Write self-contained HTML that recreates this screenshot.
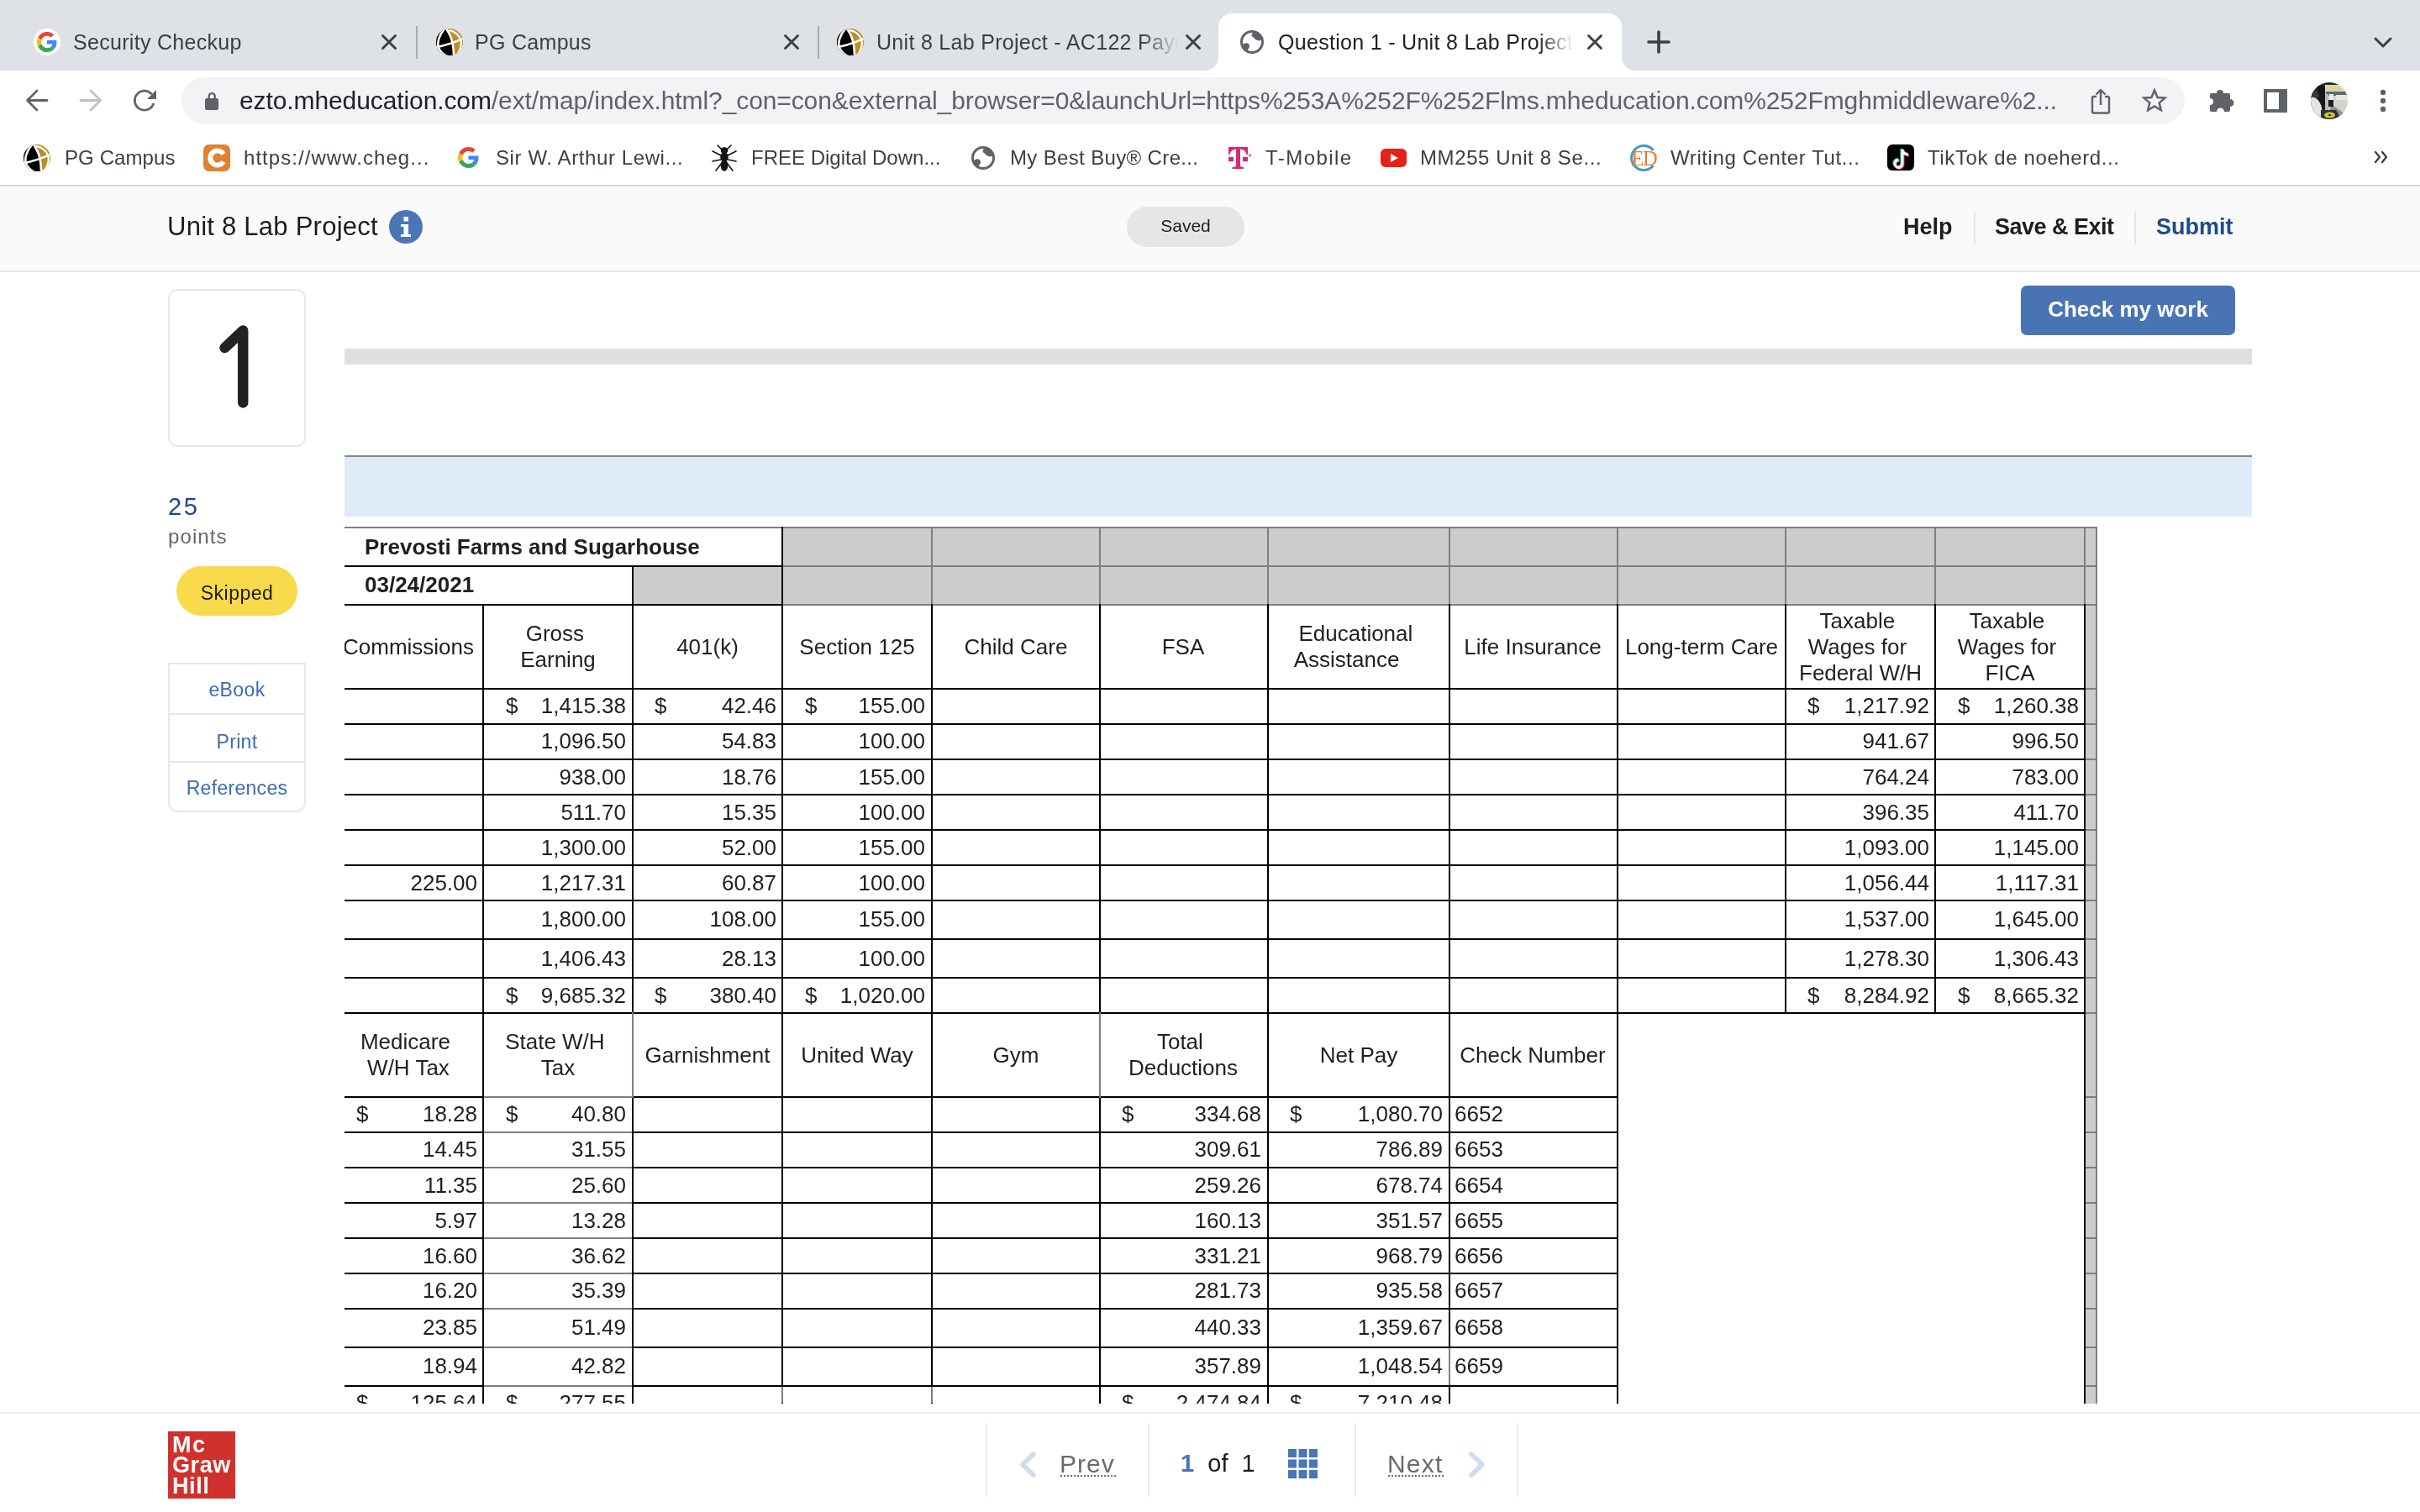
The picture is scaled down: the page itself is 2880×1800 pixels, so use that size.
<!DOCTYPE html>
<html><head><meta charset="utf-8">
<style>
*{box-sizing:border-box;margin:0;padding:0}
html,body{width:2880px;height:1800px;overflow:hidden;background:#fff;font-family:"Liberation Sans",sans-serif}
body{will-change:transform}
.abs{position:absolute}
#tabs{position:absolute;left:0;top:0;width:2880px;height:84px;background:#dee1e6}
.tt{position:absolute;top:35px;letter-spacing:0.3px;font-size:25px;line-height:30px;color:#3c4043;white-space:nowrap;overflow:hidden}
.fade{-webkit-mask-image:linear-gradient(to right,#000 88%,transparent 100%)}
.sep{position:absolute;top:31px;width:2px;height:39px;background:#a9acb1}
#toolbar{position:absolute;left:0;top:84px;width:2880px;height:137px;background:#fff}
#omni{position:absolute;left:216px;top:92px;width:2384px;height:56px;border-radius:28px;background:#f1f3f4}
.url{position:absolute;left:285px;top:104px;font-size:30px;line-height:32px;color:#5f6368;white-space:nowrap}
.bm{position:absolute;top:173px;font-size:24px;line-height:30px;color:#3c4043;white-space:nowrap}
#bmline{position:absolute;left:0;top:220px;width:2880px;height:2px;background:#d9d9d9}
#hdr{position:absolute;left:0;top:222px;width:2880px;height:101px;background:#fafafa;border-bottom:2px solid #e6e6e6}
.tc{font-size:26px;color:#1f1f1f;text-align:center;white-space:nowrap}
.tr{font-size:26px;line-height:31px;color:#1f1f1f;white-space:nowrap}
.tl{font-size:26px;line-height:31px;color:#1f1f1f;white-space:nowrap}
.bm{letter-spacing:0.6px}
</style></head>
<body>
<!-- TAB STRIP -->
<div id="tabs">
  <div class="sep" style="left:495px"></div>
  <div class="sep" style="left:973px"></div>
  <svg class="abs" style="left:0;top:0" width="2880" height="84">
    <path d="M1434 84 A16 16 0 0 0 1450 68 L1450 32 A16 16 0 0 1 1466 16 L1914 16 A16 16 0 0 1 1930 32 L1930 68 A16 16 0 0 0 1946 84 Z" fill="#fff"/>
    <!-- tab1 google favicon -->
    <circle cx="56" cy="50" r="16" fill="#fff"/>
    <g transform="translate(44,38) scale(0.5)">
      <path fill="#EA4335" d="M24 9.5c3.54 0 6.71 1.22 9.21 3.6l6.85-6.85C35.9 2.38 30.47 0 24 0 14.62 0 6.51 5.38 2.56 13.22l7.98 6.19C12.43 13.72 17.74 9.5 24 9.5z"/>
      <path fill="#4285F4" d="M46.98 24.55c0-1.57-.15-3.09-.38-4.55H24v9.02h12.94c-.58 2.96-2.26 5.480-4.78 7.18l7.73 6c4.51-4.18 7.090-10.36 7.09-17.65z"/>
      <path fill="#FBBC05" d="M10.53 28.59c-.48-1.45-.76-2.99-.76-4.59s.27-3.14.76-4.59l-7.98-6.19C.92 16.46 0 20.12 0 24c0 3.88.92 7.54 2.56 10.78l7.97-6.19z"/>
      <path fill="#34A853" d="M24 48c6.480 0 11.930-2.13 15.890-5.81l-7.73-6c-2.15 1.45-4.92 2.3-8.16 2.3-6.26 0-11.57-4.22-13.47-9.91l-7.98 6.19C6.51 42.62 14.62 48 24 48z"/>
    </g>
    <!-- PG globe tab2, tab3 -->
    <g transform="translate(519,34)">
      <clipPath id="pgc1"><circle cx="16" cy="16" r="16"/></clipPath>
      <g clip-path="url(#pgc1)">
        <rect x="-1" y="-1" width="34" height="34" fill="#b88f2e"/>
        <path d="M-1 -1 H12 C16 6 19 12 20 20 C21 25 21 29 21 33 H-1 Z" fill="#000"/>
        <path d="M11 -1 C3 8 1 17 3 23 C5 28 9 31 15 34" fill="none" stroke="#fff" stroke-width="2.6"/>
        <path d="M12 0 C16 6 19 12 20 20 C21 25 21 29 21 34" fill="none" stroke="#fff" stroke-width="2.6"/>
        <path d="M-1 22.5 C10 20.5 22 16.5 33 11.5" fill="none" stroke="#fff" stroke-width="2.6"/>
        <path d="M15 1.8 C22 3 28 8 29.5 14 C30.5 20 28.5 26 25 31" fill="none" stroke="#fff" stroke-width="2.2"/>
      </g>
    </g>
    <g transform="translate(996,34)">
      <clipPath id="pgc2"><circle cx="16" cy="16" r="16"/></clipPath>
      <g clip-path="url(#pgc2)">
        <rect x="-1" y="-1" width="34" height="34" fill="#b88f2e"/>
        <path d="M-1 -1 H12 C16 6 19 12 20 20 C21 25 21 29 21 33 H-1 Z" fill="#000"/>
        <path d="M11 -1 C3 8 1 17 3 23 C5 28 9 31 15 34" fill="none" stroke="#fff" stroke-width="2.6"/>
        <path d="M12 0 C16 6 19 12 20 20 C21 25 21 29 21 34" fill="none" stroke="#fff" stroke-width="2.6"/>
        <path d="M-1 22.5 C10 20.5 22 16.5 33 11.5" fill="none" stroke="#fff" stroke-width="2.6"/>
        <path d="M15 1.8 C22 3 28 8 29.5 14 C30.5 20 28.5 26 25 31" fill="none" stroke="#fff" stroke-width="2.2"/>
      </g>
    </g>
    <!-- generic globe active tab -->
    <g transform="translate(1476,36)">
      <circle cx="14" cy="14" r="12.5" fill="#fff" stroke="#5f6368" stroke-width="3"/>
      <path d="M3 17 C7 14 11 15 11 19 C11 22 8 22 9 26 C5 24 3 21 3 17Z" fill="#5f6368"/>
      <path d="M16 2.5 C13 4 13 7 15 8 C17 9 17 11 20 12 C23 13 25 12 26 10 C24 6 21 3 16 2.5Z" fill="#5f6368"/>
    </g>
    <!-- close x -->
    <g transform="translate(463,50)"><path d="M-7.5 -7.5 L7.5 7.5 M7.5 -7.5 L-7.5 7.5" stroke="#3c4043" stroke-width="2.9" stroke-linecap="round"/></g>
    <g transform="translate(942,50)"><path d="M-7.5 -7.5 L7.5 7.5 M7.5 -7.5 L-7.5 7.5" stroke="#3c4043" stroke-width="2.9" stroke-linecap="round"/></g>
    <g transform="translate(1420,50)"><path d="M-7.5 -7.5 L7.5 7.5 M7.5 -7.5 L-7.5 7.5" stroke="#3c4043" stroke-width="2.9" stroke-linecap="round"/></g>
    <g transform="translate(1898,50)"><path d="M-7.5 -7.5 L7.5 7.5 M7.5 -7.5 L-7.5 7.5" stroke="#3c4043" stroke-width="2.9" stroke-linecap="round"/></g>
    <!-- plus -->
    <path d="M1974 38 V62 M1962 50 H1986" stroke="#3c4043" stroke-width="3.6" stroke-linecap="round"/>
    <!-- chevron -->
    <path d="M2827 46 L2836 55 L2845 46" stroke="#3c4043" stroke-width="3" fill="none" stroke-linecap="round" stroke-linejoin="round"/>
  </svg>
  <div class="tt" style="left:87px;width:340px;color:#3c4043">Security Checkup</div>
  <div class="tt" style="left:565px;width:340px;color:#3c4043">PG Campus</div>
  <div class="tt fade" style="left:1043px;width:360px;color:#3c4043">Unit 8 Lab Project - AC122 Payroll</div>
  <div class="tt fade" style="left:1521px;width:352px;color:#202124">Question 1 - Unit 8 Lab Project</div>
</div>

<!-- TOOLBAR -->
<div id="toolbar"></div>
<div id="omni"></div>
<svg class="abs" style="left:0;top:84px" width="2880" height="137">
  <g transform="translate(0,-84)">
  <!-- back -->
  <path d="M56 119.5 H33 M44 108 L32.5 119.5 L44 131" stroke="#5f6368" stroke-width="2.8" fill="none" stroke-linecap="round" stroke-linejoin="round"/>
  <!-- forward -->
  <path d="M96 119.5 H119 M108 108 L119.5 119.5 L108 131" stroke="#bdc1c6" stroke-width="2.8" fill="none" stroke-linecap="round" stroke-linejoin="round"/>
  <!-- reload -->
  <path d="M182.5 124 A11.5 11.5 0 1 1 180 111.5" stroke="#5f6368" stroke-width="2.8" fill="none" stroke-linecap="round"/>
  <path d="M186 107 L186 118 L175 118 Z" fill="#5f6368"/>
  <!-- lock -->
  <rect x="244" y="117" width="16" height="14" rx="2" fill="#5f6368"/>
  <path d="M248.7 118 V114.6 A3.5 3.5 0 0 1 255.7 114.6 V118" stroke="#5f6368" stroke-width="2.4" fill="none"/>
  <!-- share -->
  <path d="M2495 115 H2491.5 A1.5 1.5 0 0 0 2490 116.5 V133 A1.5 1.5 0 0 0 2491.5 134.5 H2508.5 A1.5 1.5 0 0 0 2510 133 V116.5 A1.5 1.5 0 0 0 2508.5 115 H2505" stroke="#5f6368" stroke-width="2.4" fill="none"/>
  <path d="M2500 125 V107.5 M2494.5 112.5 L2500 107 L2505.5 112.5" stroke="#5f6368" stroke-width="2.4" fill="none" stroke-linejoin="round"/>
  <!-- star -->
  <path d="M2564 107.5 L2567.6 116 L2576.5 116.6 L2569.7 122.4 L2571.8 131.2 L2564 126.4 L2556.2 131.2 L2558.3 122.4 L2551.5 116.6 L2560.4 116 Z" stroke="#5f6368" stroke-width="2.5" fill="none" stroke-linejoin="miter"/>
  <!-- puzzle -->
  <path d="M2632 111 H2638 A4 4 0 0 1 2646 111 H2652 A2 2 0 0 1 2654 113 V118 A4 4 0 0 1 2654 127 V131 A2 2 0 0 1 2652 133 H2647 A4 4 0 0 0 2638 133 H2632 A2 2 0 0 1 2630 131 V125 A4 4 0 0 0 2630 117 V113 A2 2 0 0 1 2632 111 Z" fill="#5f6368"/>
  <!-- side panel -->
  <rect x="2694" y="106" width="28" height="28" fill="#5f6368"/>
  <rect x="2698" y="110" width="14" height="20" fill="#fff"/>
  <!-- avatar -->
  <defs>
    <linearGradient id="av" x1="0" y1="0" x2="1" y2="0.3">
      <stop offset="0" stop-color="#4a4f55"/><stop offset="0.35" stop-color="#2b2e33"/><stop offset="0.55" stop-color="#9aa3ad"/><stop offset="1" stop-color="#d9d6cc"/>
    </linearGradient>
    <clipPath id="avc"><circle cx="2772" cy="120" r="22"/></clipPath>
  </defs>
  <g clip-path="url(#avc)">
    <g transform="translate(2750,98)">
    <rect x="0" y="0" width="44" height="44" fill="#d6d4ca"/>
    <rect x="16" y="1.5" width="28" height="13" fill="#ddd6a4"/>
    <rect x="18" y="11" width="26" height="5" fill="#55706a"/>
    <rect x="30" y="15" width="14" height="6" fill="#e6e8e0"/>
    <path d="M24 26 L44 40 V44 H20 Z" fill="#8e8f8c"/>
    <rect x="17" y="0" width="18" height="3" fill="#1f2838"/>
    <rect x="0" y="0" width="17" height="44" fill="#2a2b2e"/>
    <rect x="8" y="4" width="9" height="30" fill="#151618"/><rect x="17" y="14" width="4" height="20" fill="#b8bcbe"/>
    <path d="M0 11 C4 9 9 10 10 16 L8 20 H0Z" fill="#4a3428"/>
    <path d="M0 18 C6 17 11 22 13 30 L14 40 L6 44 H0Z" fill="#e4e4ea"/>
    <rect x="22" y="14" width="5" height="8" fill="#ececf0"/>
    <rect x="21" y="21" width="6" height="8" fill="#1e1e22"/>
    <path d="M12 33 L30 33 L36 44 H12Z" fill="#2e3236"/>
    <ellipse cx="22.5" cy="39" rx="6.5" ry="3.5" fill="#d9c43a"/>
    <ellipse cx="22.5" cy="39" rx="2" ry="1" fill="#222"/>
    </g>
  </g>
  <!-- kebab -->
  <circle cx="2836" cy="110" r="3.2" fill="#5f6368"/><circle cx="2836" cy="120" r="3.2" fill="#5f6368"/><circle cx="2836" cy="130" r="3.2" fill="#5f6368"/>
  <!-- bookmark icons -->
  <g transform="translate(28,172)">
      <clipPath id="pgc3"><circle cx="16" cy="16" r="16"/></clipPath>
      <g clip-path="url(#pgc3)">
        <rect x="-1" y="-1" width="34" height="34" fill="#b88f2e"/>
        <path d="M-1 -1 H12 C16 6 19 12 20 20 C21 25 21 29 21 33 H-1 Z" fill="#000"/>
        <path d="M11 -1 C3 8 1 17 3 23 C5 28 9 31 15 34" fill="none" stroke="#fff" stroke-width="2.6"/>
        <path d="M12 0 C16 6 19 12 20 20 C21 25 21 29 21 34" fill="none" stroke="#fff" stroke-width="2.6"/>
        <path d="M-1 22.5 C10 20.5 22 16.5 33 11.5" fill="none" stroke="#fff" stroke-width="2.6"/>
        <path d="M15 1.8 C22 3 28 8 29.5 14 C30.5 20 28.5 26 25 31" fill="none" stroke="#fff" stroke-width="2.2"/>
      </g>
    </g>
  <rect x="242" y="172" width="32" height="32" rx="7" fill="#e08031"/>
  <path d="M266 183.5 A8.5 8.5 0 1 0 266 192.5" stroke="#fff" stroke-width="6" fill="none"/>
  <g transform="translate(545,175) scale(0.52)">
      <path fill="#EA4335" d="M24 9.5c3.54 0 6.71 1.22 9.21 3.6l6.85-6.850C35.9 2.38 30.47 0 24 0 14.62 0 6.51 5.38 2.56 13.22l7.98 6.19C12.43 13.72 17.74 9.5 24 9.5z"/>
      <path fill="#4285F4" d="M46.98 24.55c0-1.57-.15-3.09-.38-4.55H24v9.02h12.94c-.58 2.96-2.26 5.48-4.78 7.18l7.73 6c4.51-4.18 7.09-10.36 7.09-17.65z"/>
      <path fill="#FBBC05" d="M10.53 28.59c-.48-1.45-.76-2.99-.76-4.59s.27-3.14.76-4.59l-7.98-6.19C.92 16.46 0 20.12 0 24c0 3.88.92 7.54 2.56 10.78l7.97-6.19z"/>
      <path fill="#34A853" d="M24 48c6.48 0 11.93-2.13 15.89-5.81l-7.73-6c-2.15 1.45-4.92 2.3-8.16 2.3-6.26 0-11.57-4.22-13.47-9.91l-7.98 6.19C6.51 42.62 14.62 48 24 48z"/>
  </g>
  <!-- bug -->
  <g transform="translate(862,188)" stroke="#111" stroke-width="1.6" fill="none" stroke-linecap="round">
    <ellipse cx="0" cy="-9" rx="3.5" ry="3" fill="#111"/>
    <ellipse cx="0" cy="-1" rx="4" ry="5" fill="#111"/>
    <ellipse cx="0" cy="9" rx="3.5" ry="6" fill="#111"/>
    <path d="M-3 -10 L-8 -15 M3 -10 L8 -15 M-4 -3 L-14 -8 M4 -3 L14 -8 M-4 2 L-14 4 M4 2 L14 4 M-3 6 L-10 15 M3 6 L10 15"/>
  </g>
  <g transform="translate(1156,174)">
      <circle cx="14" cy="14" r="12.5" fill="#fff" stroke="#5f6368" stroke-width="3"/>
      <path d="M3 17 C7 14 11 15 11 19 C11 22 8 22 9 26 C5 24 3 21 3 17Z" fill="#5f6368"/>
      <path d="M16 2.5 C13 4 13 7 15 8 C17 9 17 11 20 12 C23 13 25 12 26 10 C24 6 21 3 16 2.5Z" fill="#5f6368"/>
    </g>
  <!-- T-Mobile -->
  <path d="M1462 175 H1485 V184 H1483.5 C1482.5 180 1480 177.8 1476 177.8 V197 C1476 198.6 1477.5 199 1480 199 V201 H1466.5 V199 C1469 199 1471 198.6 1471 197 V177.8 C1467 177.8 1464.5 180 1463.5 184 H1462 Z" fill="#d6297a"/>
  <rect x="1462" y="187" width="6" height="5.2" fill="#d6297a"/><rect x="1479" y="187" width="6" height="5.2" fill="#d6297a"/>
  <circle cx="1487.5" cy="185" r="2" fill="#e58ab4"/>
  <!-- YouTube -->
  <rect x="1643" y="177" width="31" height="22" rx="6" fill="#e62117"/>
  <path d="M1655 183 L1664 188 L1655 193Z" fill="#fff"/>
  <!-- ED -->
  <path d="M1967.5 179 A14.5 14.5 0 1 0 1967.5 197" stroke="#4399c6" stroke-width="3" fill="none"/>
  <text x="1941.5" y="196.8" font-family="Liberation Serif" font-size="24.5" fill="#ec7c30" letter-spacing="-1.5">ED</text>
  <!-- TikTok -->
  <rect x="2246" y="172" width="32" height="31" rx="6" fill="#000"/>
  <path d="M2264 178 V195 A4.5 4.5 0 1 1 2259.5 190.5 M2264 178 C2265 182 2268 184 2271 184" stroke="#25f4ee" stroke-width="3" fill="none" transform="translate(-1,-1)"/>
  <path d="M2264 178 V195 A4.5 4.5 0 1 1 2259.5 190.5 M2264 178 C2265 182 2268 184 2271 184" stroke="#fe2c55" stroke-width="3" fill="none" transform="translate(1,1)"/>
  <path d="M2264 178 V195 A4.5 4.5 0 1 1 2259.5 190.5 M2264 178 C2265 182 2268 184 2271 184" stroke="#fff" stroke-width="3" fill="none"/>
  <!-- >> -->
  <path d="M2827 181 L2832 187 L2827 193 M2835 181 L2840 187 L2835 193" stroke="#3c4043" stroke-width="2.4" fill="none" stroke-linecap="round" stroke-linejoin="round"/>
  </g>
</svg>
<div class="url" style="letter-spacing:-0.1px"><span style="color:#202124">ezto.mheducation.com</span>/ext/map/index.html?_con=con&amp;external_browser=0&amp;launchUrl=https%253A%252F%252Flms.mheducation.com%252Fmghmiddleware%2...</div>
<div class="bm" style="left:77px;letter-spacing:0.1px">PG Campus</div>
<div class="bm" style="left:290px;letter-spacing:1.05px">https://www.cheg...</div>
<div class="bm" style="left:590px">Sir W. Arthur Lewi...</div>
<div class="bm" style="left:894px;letter-spacing:0px">FREE Digital Down...</div>
<div class="bm" style="left:1202px;letter-spacing:0.35px">My Best Buy® Cre...</div>
<div class="bm" style="left:1506px;letter-spacing:1.45px">T-Mobile</div>
<div class="bm" style="left:1690px">MM255 Unit 8 Se...</div>
<div class="bm" style="left:1988px">Writing Center Tut...</div>
<div class="bm" style="left:2294px">TikTok de noeherd...</div>
<div id="bmline"></div>
<div class="abs" style="left:0;top:222px;width:2880px;height:101px;background:#fafafa"></div>
<div class="abs" style="left:0;top:322px;width:2880px;height:2px;background:#e8e8e8"></div>
<div class="abs hd" style="left:199px;top:250px;font-size:31px;line-height:40px;color:#1d1d1d;letter-spacing:0.25px">Unit 8 Lab Project</div>
<svg class="abs" style="left:463px;top:250px" width="40" height="40"><circle cx="20" cy="20" r="20" fill="#4a76b8"/><rect x="17.5" y="8" width="5.5" height="5.5" fill="#fff"/><path d="M14 17 H23 V29 H26 V32 H14 V29 H17.5 V20 H14 Z" fill="#fff"/></svg>
<div class="abs" style="left:1341px;top:246px;width:140px;height:48px;border-radius:24px;background:#e6e5e8"></div>
<div class="abs" style="left:1341px;top:253px;width:140px;text-align:center;font-size:21px;line-height:32px;color:#1d1d1d">Saved</div>
<div class="abs" style="left:2265px;top:253px;font-size:27px;font-weight:bold;line-height:34px;color:#1d1d1d">Help</div>
<div class="abs" style="left:2349px;top:252px;width:2px;height:39px;background:#e6e6e6"></div>
<div class="abs" style="left:2374px;top:253px;font-size:27px;font-weight:bold;line-height:34px;color:#1d1d1d;letter-spacing:-0.5px">Save &amp; Exit</div>
<div class="abs" style="left:2540px;top:252px;width:2px;height:39px;background:#e6e6e6"></div>
<div class="abs" style="left:2566px;top:253px;font-size:27px;font-weight:bold;line-height:34px;color:#1f4a8c">Submit</div>

<div class="abs" style="left:200px;top:344px;width:164px;height:188px;border:2px solid #e8e8e8;border-radius:11px;background:#fff"></div>
<svg class="abs" style="left:240px;top:380px" width="80" height="115"><path d="M27.5 34 L49.2 13.6 V99.4" stroke="#222" stroke-width="12.5" fill="none" stroke-linecap="round" stroke-linejoin="round"/></svg>
<div class="abs" style="left:200px;top:586px;font-size:29px;line-height:34px;color:#1f4488;letter-spacing:2.5px">25</div>
<div class="abs" style="left:200px;top:624px;font-size:24px;line-height:30px;color:#666;letter-spacing:1.1px">points</div>
<div class="abs" style="left:210px;top:674px;width:144px;height:59px;border-radius:30px;background:#f8da4a"></div>
<div class="abs" style="left:210px;top:691px;width:144px;text-align:center;font-size:23px;line-height:30px;color:#1d1d1d;letter-spacing:0.5px">Skipped</div>
<div class="abs" style="left:200px;top:789px;width:164px;height:178px;border:2px solid #e8e8e8;border-radius:0 0 12px 12px;background:#fff"></div>
<div class="abs" style="left:202px;top:849px;width:160px;height:2px;background:#e8e8e8"></div>
<div class="abs" style="left:202px;top:906px;width:160px;height:2px;background:#e8e8e8"></div>
<div class="abs" style="left:200px;top:806px;width:164px;text-align:center;font-size:23px;line-height:30px;color:#3a6cb4;letter-spacing:0.4px">eBook</div>
<div class="abs" style="left:200px;top:868px;width:164px;text-align:center;font-size:23px;line-height:30px;color:#3a6cb4;letter-spacing:0.3px">Print</div>
<div class="abs" style="left:200px;top:923px;width:164px;text-align:center;font-size:23px;line-height:30px;color:#3a6cb4;letter-spacing:0.3px">References</div>

<div class="abs" style="left:2405px;top:340px;width:255px;height:59px;border-radius:7px;background:#4874b3"></div>
<div class="abs" style="left:2405px;top:351px;width:255px;text-align:center;font-size:26px;font-weight:bold;line-height:34px;color:#fff">Check my work</div>
<div class="abs" style="left:410px;top:415px;width:2270px;height:19px;background:#dfdfdf"></div>
<div class="abs" style="left:410px;top:542px;width:2270px;height:2px;background:#888"></div>
<div class="abs" style="left:410px;top:544px;width:2270px;height:71px;background:#deebf8"></div>

<div class="abs" style="left:410px;top:0;width:2270px;height:1671px;overflow:hidden">
<div class="abs" style="left:521px;top:628px;width:1564px;height:92px;background:#cccccc"></div>
<div class="abs" style="left:343px;top:674px;width:1742px;height:46px;background:#cccccc"></div>
<div class="abs" style="left:0px;top:628px;width:521px;height:46px;background:#fff"></div>
<div class="abs" style="left:0px;top:674px;width:343px;height:46px;background:#fff"></div>
<div class="abs" style="left:2071px;top:628px;width:14px;height:1043px;background:#cccccc"></div>
<div class="abs" style="left:-1px;top:627px;width:2087px;height:2px;background:#7f7f7f"></div>
<div class="abs" style="left:-1px;top:673px;width:523px;height:2px;background:#000"></div>
<div class="abs" style="left:520px;top:673px;width:1566px;height:2px;background:#7f7f7f"></div>
<div class="abs" style="left:-1px;top:719px;width:523px;height:2px;background:#000"></div>
<div class="abs" style="left:520px;top:719px;width:1566px;height:2px;background:#7f7f7f"></div>
<div class="abs" style="left:-1px;top:819px;width:2073px;height:2px;background:#000"></div>
<div class="abs" style="left:2070px;top:819px;width:16px;height:2px;background:#7f7f7f"></div>
<div class="abs" style="left:-1px;top:861px;width:2073px;height:2px;background:#000"></div>
<div class="abs" style="left:2070px;top:861px;width:16px;height:2px;background:#7f7f7f"></div>
<div class="abs" style="left:-1px;top:903px;width:2073px;height:2px;background:#000"></div>
<div class="abs" style="left:2070px;top:903px;width:16px;height:2px;background:#7f7f7f"></div>
<div class="abs" style="left:-1px;top:945px;width:2073px;height:2px;background:#000"></div>
<div class="abs" style="left:2070px;top:945px;width:16px;height:2px;background:#7f7f7f"></div>
<div class="abs" style="left:-1px;top:987px;width:2073px;height:2px;background:#000"></div>
<div class="abs" style="left:2070px;top:987px;width:16px;height:2px;background:#7f7f7f"></div>
<div class="abs" style="left:-1px;top:1029px;width:2073px;height:2px;background:#000"></div>
<div class="abs" style="left:2070px;top:1029px;width:16px;height:2px;background:#7f7f7f"></div>
<div class="abs" style="left:-1px;top:1071px;width:2073px;height:2px;background:#000"></div>
<div class="abs" style="left:2070px;top:1071px;width:16px;height:2px;background:#7f7f7f"></div>
<div class="abs" style="left:-1px;top:1117px;width:2073px;height:2px;background:#000"></div>
<div class="abs" style="left:2070px;top:1117px;width:16px;height:2px;background:#7f7f7f"></div>
<div class="abs" style="left:-1px;top:1163px;width:2073px;height:2px;background:#000"></div>
<div class="abs" style="left:2070px;top:1163px;width:16px;height:2px;background:#7f7f7f"></div>
<div class="abs" style="left:-1px;top:1205px;width:2073px;height:2px;background:#000"></div>
<div class="abs" style="left:2070px;top:1205px;width:16px;height:2px;background:#7f7f7f"></div>
<div class="abs" style="left:-1px;top:1305px;width:1517px;height:2px;background:#000"></div>
<div class="abs" style="left:2070px;top:1305px;width:16px;height:2px;background:#7f7f7f"></div>
<div class="abs" style="left:-1px;top:1347px;width:1517px;height:2px;background:#000"></div>
<div class="abs" style="left:2070px;top:1347px;width:16px;height:2px;background:#7f7f7f"></div>
<div class="abs" style="left:-1px;top:1389px;width:1517px;height:2px;background:#000"></div>
<div class="abs" style="left:2070px;top:1389px;width:16px;height:2px;background:#7f7f7f"></div>
<div class="abs" style="left:-1px;top:1431px;width:1517px;height:2px;background:#000"></div>
<div class="abs" style="left:2070px;top:1431px;width:16px;height:2px;background:#7f7f7f"></div>
<div class="abs" style="left:-1px;top:1473px;width:1517px;height:2px;background:#000"></div>
<div class="abs" style="left:2070px;top:1473px;width:16px;height:2px;background:#7f7f7f"></div>
<div class="abs" style="left:-1px;top:1515px;width:1517px;height:2px;background:#000"></div>
<div class="abs" style="left:2070px;top:1515px;width:16px;height:2px;background:#7f7f7f"></div>
<div class="abs" style="left:-1px;top:1557px;width:1517px;height:2px;background:#000"></div>
<div class="abs" style="left:2070px;top:1557px;width:16px;height:2px;background:#7f7f7f"></div>
<div class="abs" style="left:-1px;top:1603px;width:1517px;height:2px;background:#000"></div>
<div class="abs" style="left:2070px;top:1603px;width:16px;height:2px;background:#7f7f7f"></div>
<div class="abs" style="left:-1px;top:1649px;width:1517px;height:2px;background:#000"></div>
<div class="abs" style="left:2070px;top:1649px;width:16px;height:2px;background:#7f7f7f"></div>
<div class="abs" style="left:164px;top:1305px;width:180px;height:2px;background:#7f7f7f"></div>
<div class="abs" style="left:164px;top:1347px;width:180px;height:2px;background:#7f7f7f"></div>
<div class="abs" style="left:164px;top:1389px;width:180px;height:2px;background:#7f7f7f"></div>
<div class="abs" style="left:164px;top:1431px;width:180px;height:2px;background:#7f7f7f"></div>
<div class="abs" style="left:164px;top:1473px;width:180px;height:2px;background:#7f7f7f"></div>
<div class="abs" style="left:164px;top:1515px;width:180px;height:2px;background:#7f7f7f"></div>
<div class="abs" style="left:164px;top:1557px;width:180px;height:2px;background:#7f7f7f"></div>
<div class="abs" style="left:164px;top:1603px;width:180px;height:2px;background:#7f7f7f"></div>
<div class="abs" style="left:164px;top:1649px;width:180px;height:2px;background:#7f7f7f"></div>
<div class="abs" style="left:698px;top:627px;width:2px;height:94px;background:#7f7f7f"></div>
<div class="abs" style="left:898px;top:627px;width:2px;height:94px;background:#7f7f7f"></div>
<div class="abs" style="left:1098px;top:627px;width:2px;height:94px;background:#7f7f7f"></div>
<div class="abs" style="left:1314px;top:627px;width:2px;height:94px;background:#7f7f7f"></div>
<div class="abs" style="left:1514px;top:627px;width:2px;height:94px;background:#7f7f7f"></div>
<div class="abs" style="left:1714px;top:627px;width:2px;height:94px;background:#7f7f7f"></div>
<div class="abs" style="left:1892px;top:627px;width:2px;height:94px;background:#7f7f7f"></div>
<div class="abs" style="left:520px;top:627px;width:2px;height:48px;background:#000"></div>
<div class="abs" style="left:520px;top:673px;width:2px;height:48px;background:#000"></div>
<div class="abs" style="left:342px;top:673px;width:2px;height:48px;background:#000"></div>
<div class="abs" style="left:2070px;top:627px;width:2px;height:94px;background:#7f7f7f"></div>
<div class="abs" style="left:2084px;top:627px;width:2px;height:1045px;background:#7f7f7f"></div>
<div class="abs" style="left:164px;top:719px;width:2px;height:488px;background:#000"></div>
<div class="abs" style="left:342px;top:719px;width:2px;height:488px;background:#000"></div>
<div class="abs" style="left:520px;top:719px;width:2px;height:488px;background:#000"></div>
<div class="abs" style="left:698px;top:719px;width:2px;height:488px;background:#000"></div>
<div class="abs" style="left:898px;top:719px;width:2px;height:488px;background:#000"></div>
<div class="abs" style="left:1098px;top:719px;width:2px;height:488px;background:#000"></div>
<div class="abs" style="left:1314px;top:719px;width:2px;height:488px;background:#000"></div>
<div class="abs" style="left:1514px;top:719px;width:2px;height:488px;background:#000"></div>
<div class="abs" style="left:1714px;top:719px;width:2px;height:488px;background:#000"></div>
<div class="abs" style="left:1892px;top:719px;width:2px;height:488px;background:#000"></div>
<div class="abs" style="left:2070px;top:719px;width:2px;height:488px;background:#000"></div>
<div class="abs" style="left:164px;top:1205px;width:2px;height:467px;background:#000"></div>
<div class="abs" style="left:342px;top:1205px;width:2px;height:467px;background:#000"></div>
<div class="abs" style="left:520px;top:1205px;width:2px;height:467px;background:#000"></div>
<div class="abs" style="left:698px;top:1205px;width:2px;height:467px;background:#000"></div>
<div class="abs" style="left:898px;top:1205px;width:2px;height:467px;background:#000"></div>
<div class="abs" style="left:1098px;top:1205px;width:2px;height:467px;background:#000"></div>
<div class="abs" style="left:1314px;top:1205px;width:2px;height:467px;background:#000"></div>
<div class="abs" style="left:1514px;top:1205px;width:2px;height:467px;background:#000"></div>
<div class="abs" style="left:2070px;top:1205px;width:2px;height:467px;background:#000"></div>
<div class="abs" style="left:342px;top:1205px;width:2px;height:102px;background:#7f7f7f"></div>
<div class="abs" style="left:898px;top:1205px;width:2px;height:102px;background:#7f7f7f"></div>
<div class="abs" style="left:520px;top:1651px;width:2px;height:19px;background:#7f7f7f"></div>
<div class="abs" style="left:698px;top:1651px;width:2px;height:19px;background:#7f7f7f"></div>
<div class="abs" style="left:1314px;top:1605px;width:2px;height:44px;background:#7f7f7f"></div>
<div class="abs tl" style="left:24px;top:635.5px;font-weight:bold;">Prevosti Farms and Sugarhouse</div>
<div class="abs tl" style="left:24px;top:681.4px;font-weight:bold;">03/24/2021</div>
<div class="abs tc" style="left:-13px;top:754.8px;width:178px;line-height:31px;">Commissions</div>
<div class="abs tc" style="left:165px;top:739.2px;width:178px;line-height:31px;">Gross&nbsp;<br>Earning</div>
<div class="abs tc" style="left:343px;top:754.8px;width:178px;line-height:31px;">401(k)</div>
<div class="abs tc" style="left:521px;top:754.8px;width:178px;line-height:31px;">Section 125</div>
<div class="abs tc" style="left:699px;top:754.8px;width:200px;line-height:31px;">Child Care</div>
<div class="abs tc" style="left:898px;top:754.8px;width:200px;line-height:31px;">FSA</div>
<div class="abs tc" style="left:1099px;top:739.2px;width:216px;line-height:31px;">Educational&nbsp;<br>Assistance&nbsp;&nbsp;&nbsp;&nbsp;</div>
<div class="abs tc" style="left:1314px;top:754.8px;width:200px;line-height:31px;">Life Insurance</div>
<div class="abs tc" style="left:1515px;top:754.8px;width:200px;line-height:31px;">Long-term Care</div>
<div class="abs tc" style="left:1715px;top:723.8px;width:178px;line-height:31px;">Taxable&nbsp;<br>Wages for&nbsp;<br>Federal W/H</div>
<div class="abs tc" style="left:1893px;top:723.8px;width:178px;line-height:31px;">Taxable&nbsp;<br>Wages for&nbsp;<br>FICA</div>
<div class="abs tr" style="right:2112px;top:1035.5px">225.00</div>
<div class="abs tl" style="left:192px;top:825.3px;">$</div>
<div class="abs tr" style="right:1935px;top:825.3px">1,415.38</div>
<div class="abs tr" style="right:1935px;top:867.4px">1,096.50</div>
<div class="abs tr" style="right:1935px;top:909.5px">938.00</div>
<div class="abs tr" style="right:1935px;top:951.5px">511.70</div>
<div class="abs tr" style="right:1935px;top:993.5px">1,300.00</div>
<div class="abs tr" style="right:1935px;top:1035.5px">1,217.31</div>
<div class="abs tr" style="right:1935px;top:1079.4px">1,800.00</div>
<div class="abs tr" style="right:1935px;top:1125.6px">1,406.43</div>
<div class="abs tl" style="left:192px;top:1169.5px;">$</div>
<div class="abs tr" style="right:1935px;top:1169.5px">9,685.32</div>
<div class="abs tl" style="left:369px;top:825.3px;">$</div>
<div class="abs tr" style="right:1756px;top:825.3px">42.46</div>
<div class="abs tr" style="right:1756px;top:867.4px">54.83</div>
<div class="abs tr" style="right:1756px;top:909.5px">18.76</div>
<div class="abs tr" style="right:1756px;top:951.5px">15.35</div>
<div class="abs tr" style="right:1756px;top:993.5px">52.00</div>
<div class="abs tr" style="right:1756px;top:1035.5px">60.87</div>
<div class="abs tr" style="right:1756px;top:1079.4px">108.00</div>
<div class="abs tr" style="right:1756px;top:1125.6px">28.13</div>
<div class="abs tl" style="left:369px;top:1169.5px;">$</div>
<div class="abs tr" style="right:1756px;top:1169.5px">380.40</div>
<div class="abs tl" style="left:548px;top:825.3px;">$</div>
<div class="abs tr" style="right:1579px;top:825.3px">155.00</div>
<div class="abs tr" style="right:1579px;top:867.4px">100.00</div>
<div class="abs tr" style="right:1579px;top:909.5px">155.00</div>
<div class="abs tr" style="right:1579px;top:951.5px">100.00</div>
<div class="abs tr" style="right:1579px;top:993.5px">155.00</div>
<div class="abs tr" style="right:1579px;top:1035.5px">100.00</div>
<div class="abs tr" style="right:1579px;top:1079.4px">155.00</div>
<div class="abs tr" style="right:1579px;top:1125.6px">100.00</div>
<div class="abs tl" style="left:548px;top:1169.5px;">$</div>
<div class="abs tr" style="right:1579px;top:1169.5px">1,020.00</div>
<div class="abs tl" style="left:1741px;top:825.3px;">$</div>
<div class="abs tr" style="right:384px;top:825.3px">1,217.92</div>
<div class="abs tr" style="right:384px;top:867.4px">941.67</div>
<div class="abs tr" style="right:384px;top:909.5px">764.24</div>
<div class="abs tr" style="right:384px;top:951.5px">396.35</div>
<div class="abs tr" style="right:384px;top:993.5px">1,093.00</div>
<div class="abs tr" style="right:384px;top:1035.5px">1,056.44</div>
<div class="abs tr" style="right:384px;top:1079.4px">1,537.00</div>
<div class="abs tr" style="right:384px;top:1125.6px">1,278.30</div>
<div class="abs tl" style="left:1741px;top:1169.5px;">$</div>
<div class="abs tr" style="right:384px;top:1169.5px">8,284.92</div>
<div class="abs tl" style="left:1920px;top:825.3px;">$</div>
<div class="abs tr" style="right:206px;top:825.3px">1,260.38</div>
<div class="abs tr" style="right:206px;top:867.4px">996.50</div>
<div class="abs tr" style="right:206px;top:909.5px">783.00</div>
<div class="abs tr" style="right:206px;top:951.5px">411.70</div>
<div class="abs tr" style="right:206px;top:993.5px">1,145.00</div>
<div class="abs tr" style="right:206px;top:1035.5px">1,117.31</div>
<div class="abs tr" style="right:206px;top:1079.4px">1,645.00</div>
<div class="abs tr" style="right:206px;top:1125.6px">1,306.43</div>
<div class="abs tl" style="left:1920px;top:1169.5px;">$</div>
<div class="abs tr" style="right:206px;top:1169.5px">8,665.32</div>
<div class="abs tc" style="left:-13px;top:1225.3px;width:178px;line-height:31px;">Medicare&nbsp;<br>W/H Tax</div>
<div class="abs tc" style="left:165px;top:1225.3px;width:178px;line-height:31px;">State W/H&nbsp;<br>Tax</div>
<div class="abs tc" style="left:343px;top:1240.8px;width:178px;line-height:31px;">Garnishment</div>
<div class="abs tc" style="left:521px;top:1240.8px;width:178px;line-height:31px;">United Way</div>
<div class="abs tc" style="left:699px;top:1240.8px;width:200px;line-height:31px;">Gym</div>
<div class="abs tc" style="left:898px;top:1225.3px;width:200px;line-height:31px;">Total&nbsp;<br>Deductions</div>
<div class="abs tc" style="left:1099px;top:1240.8px;width:216px;line-height:31px;">Net Pay</div>
<div class="abs tc" style="left:1314px;top:1240.8px;width:200px;line-height:31px;">Check Number</div>
<div class="abs tl" style="left:14px;top:1311.2px;">$</div>
<div class="abs tr" style="right:2112px;top:1311.2px">18.28</div>
<div class="abs tr" style="right:2112px;top:1353.3px">14.45</div>
<div class="abs tr" style="right:2112px;top:1395.5px">11.35</div>
<div class="abs tr" style="right:2112px;top:1437.6px">5.97</div>
<div class="abs tr" style="right:2112px;top:1479.5px">16.60</div>
<div class="abs tr" style="right:2112px;top:1521.2px">16.20</div>
<div class="abs tr" style="right:2112px;top:1565.3px">23.85</div>
<div class="abs tr" style="right:2112px;top:1611.3px">18.94</div>
<div class="abs tl" style="left:14px;top:1655.1px;">$</div>
<div class="abs tr" style="right:2112px;top:1655.1px">125.64</div>
<div class="abs tl" style="left:192px;top:1311.2px;">$</div>
<div class="abs tr" style="right:1935px;top:1311.2px">40.80</div>
<div class="abs tr" style="right:1935px;top:1353.3px">31.55</div>
<div class="abs tr" style="right:1935px;top:1395.5px">25.60</div>
<div class="abs tr" style="right:1935px;top:1437.6px">13.28</div>
<div class="abs tr" style="right:1935px;top:1479.5px">36.62</div>
<div class="abs tr" style="right:1935px;top:1521.2px">35.39</div>
<div class="abs tr" style="right:1935px;top:1565.3px">51.49</div>
<div class="abs tr" style="right:1935px;top:1611.3px">42.82</div>
<div class="abs tl" style="left:192px;top:1655.1px;">$</div>
<div class="abs tr" style="right:1935px;top:1655.1px">277.55</div>
<div class="abs tl" style="left:925px;top:1311.2px;">$</div>
<div class="abs tr" style="right:1179px;top:1311.2px">334.68</div>
<div class="abs tr" style="right:1179px;top:1353.3px">309.61</div>
<div class="abs tr" style="right:1179px;top:1395.5px">259.26</div>
<div class="abs tr" style="right:1179px;top:1437.6px">160.13</div>
<div class="abs tr" style="right:1179px;top:1479.5px">331.21</div>
<div class="abs tr" style="right:1179px;top:1521.2px">281.73</div>
<div class="abs tr" style="right:1179px;top:1565.3px">440.33</div>
<div class="abs tr" style="right:1179px;top:1611.3px">357.89</div>
<div class="abs tl" style="left:925px;top:1655.1px;">$</div>
<div class="abs tr" style="right:1179px;top:1655.1px">2,474.84</div>
<div class="abs tl" style="left:1125px;top:1311.2px;">$</div>
<div class="abs tr" style="right:963px;top:1311.2px">1,080.70</div>
<div class="abs tr" style="right:963px;top:1353.3px">786.89</div>
<div class="abs tr" style="right:963px;top:1395.5px">678.74</div>
<div class="abs tr" style="right:963px;top:1437.6px">351.57</div>
<div class="abs tr" style="right:963px;top:1479.5px">968.79</div>
<div class="abs tr" style="right:963px;top:1521.2px">935.58</div>
<div class="abs tr" style="right:963px;top:1565.3px">1,359.67</div>
<div class="abs tr" style="right:963px;top:1611.3px">1,048.54</div>
<div class="abs tl" style="left:1125px;top:1655.1px;">$</div>
<div class="abs tr" style="right:963px;top:1655.1px">7,210.48</div>
<div class="abs tl" style="left:1321px;top:1311.2px;">6652</div>
<div class="abs tl" style="left:1321px;top:1353.3px;">6653</div>
<div class="abs tl" style="left:1321px;top:1395.5px;">6654</div>
<div class="abs tl" style="left:1321px;top:1437.6px;">6655</div>
<div class="abs tl" style="left:1321px;top:1479.5px;">6656</div>
<div class="abs tl" style="left:1321px;top:1521.2px;">6657</div>
<div class="abs tl" style="left:1321px;top:1565.3px;">6658</div>
<div class="abs tl" style="left:1321px;top:1611.3px;">6659</div>
</div>
<div class="abs" style="left:0;top:1682px;width:2880px;height:118px;background:#fff"></div>
<div class="abs" style="left:0;top:1681px;width:2880px;height:2px;background:#ececec"></div>
<div class="abs" style="left:200px;top:1704px;width:80px;height:80px;background:#d0312d"></div>
<div class="abs" style="left:205px;top:1708px;font-size:27px;font-weight:bold;line-height:24.3px;color:#fff;letter-spacing:0.6px"><span style="letter-spacing:1.5px">Mc</span><br>Graw<br>Hill</div>
<div class="abs" style="left:1173px;top:1694px;width:2px;height:88px;background:#ececec"></div>
<div class="abs" style="left:1366px;top:1694px;width:2px;height:88px;background:#ececec"></div>
<div class="abs" style="left:1612px;top:1694px;width:2px;height:88px;background:#ececec"></div>
<div class="abs" style="left:1805px;top:1694px;width:2px;height:88px;background:#ececec"></div>
<svg class="abs" style="left:1200px;top:1720px" width="600" height="50">
  <path d="M30 11 L17 23.5 L30 36" stroke="#cfdbee" stroke-width="5.5" fill="none" stroke-linecap="round" stroke-linejoin="round"/>
  <path d="M551 11 L564 23.5 L551 36" stroke="#cfdbee" stroke-width="5.5" fill="none" stroke-linecap="round" stroke-linejoin="round"/>
  <g fill="#4a76b8">
   <rect x="333" y="5" width="10" height="10"/><rect x="345.5" y="5" width="10" height="10"/><rect x="358" y="5" width="10" height="10"/>
   <rect x="333" y="17.5" width="10" height="10"/><rect x="345.5" y="17.5" width="10" height="10"/><rect x="358" y="17.5" width="10" height="10"/>
   <rect x="333" y="30" width="10" height="10"/><rect x="345.5" y="30" width="10" height="10"/><rect x="358" y="30" width="10" height="10"/>
  </g>
</svg>
<div class="abs" style="left:1261px;top:1725px;font-size:30px;line-height:36px;color:#6b6b6b;letter-spacing:1px">Prev</div>
<div class="abs" style="left:1262px;top:1756px;width:66px;height:0;border-top:2.5px dotted #6b6b6b"></div>
<div class="abs" style="left:1651px;top:1725px;font-size:30px;line-height:36px;color:#6b6b6b;letter-spacing:1.2px">Next</div>
<div class="abs" style="left:1652px;top:1756px;width:66px;height:0;border-top:2.5px dotted #6b6b6b"></div>
<div class="abs" style="left:1405px;top:1724px;font-size:29px;line-height:36px;color:#1d1d1d;white-space:pre"><b style="color:#4a76b8">1</b>  of  1</div>

</body></html>
